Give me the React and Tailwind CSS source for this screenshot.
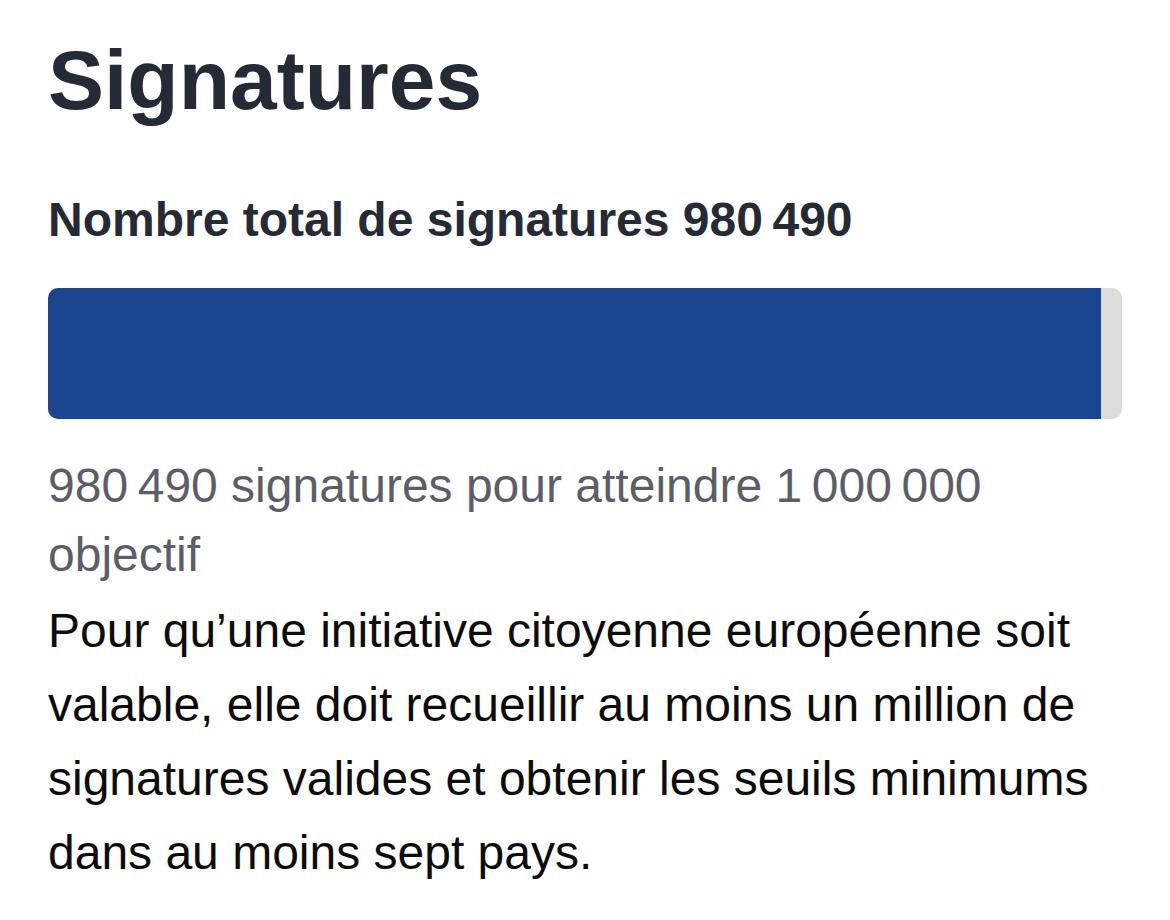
export default function App() {
  const pct = (980490 / 1000000) * 100;
  return (
    <div className="min-h-[920px] w-[1170px] bg-white px-[48px] pt-[30px]" style={{ fontFamily: '"Liberation Sans", Arial, sans-serif' }}>
      <h1 className="text-[84px] leading-[100px] font-bold text-[#252a37]">Signatures</h1>
      <h2 className="mt-[62px] text-[48px] leading-[56px] font-bold text-[#252a37]">Nombre total de signatures 980&#8239;490</h2>
      <div className="mt-[40px] h-[131px] w-full overflow-hidden rounded-[10px] bg-[#dcdcdc] flex">
        <div className="h-full bg-[#1c4590]" style={{ width: pct + '%' }} />
      </div>
      <p className="mt-[32px] text-[48px] leading-[69px] text-[#5b5e69]">
        980&#8239;490 signatures pour atteindre 1&#8239;000&#8239;000
        <br />
        objectif
      </p>
      <p className="mt-[5px] text-[48px] leading-[74px] text-[#0c0c0c]">
        Pour qu’une initiative citoyenne européenne soit valable, elle doit recueillir au moins un million de signatures valides et obtenir les seuils minimums dans au moins sept pays.
      </p>
    </div>
  );
}
